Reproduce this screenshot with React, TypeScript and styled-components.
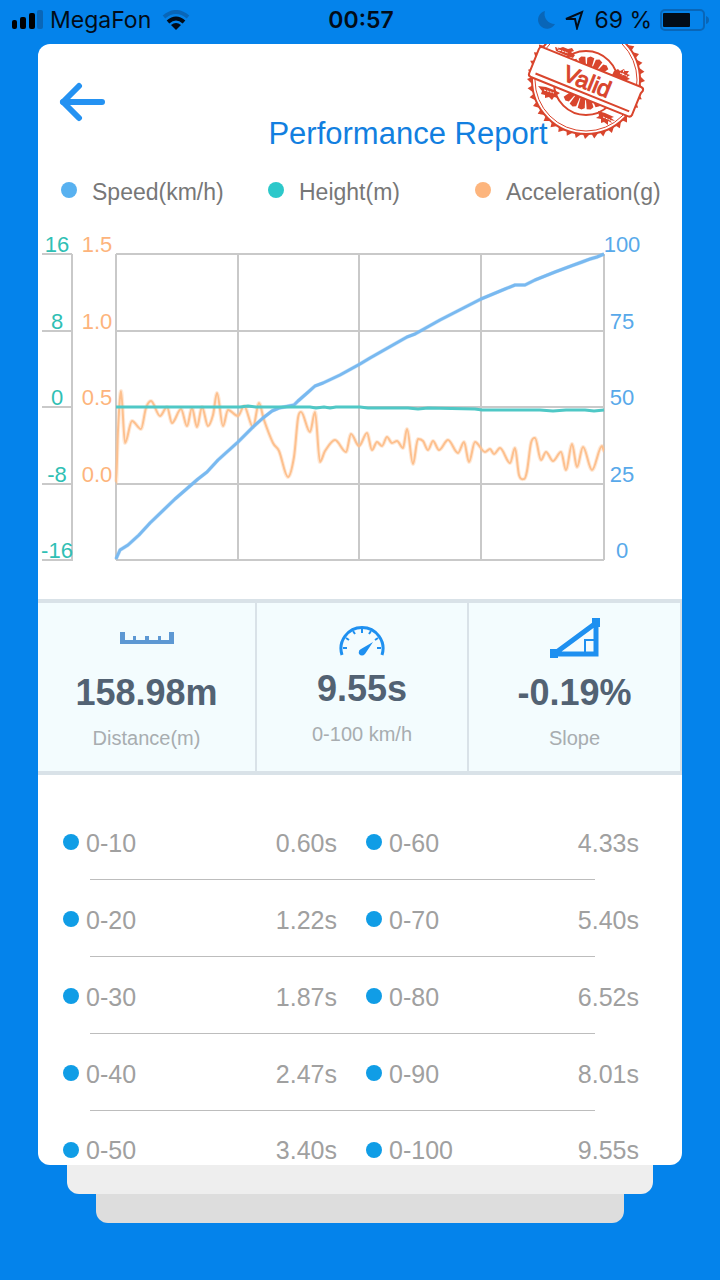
import React from 'react';
import styled, { createGlobalStyle } from 'styled-components';

const GlobalStyle = createGlobalStyle`
  *, *::before, *::after { box-sizing: border-box; }
  body {
    margin: 0;
    background: #0483eb;
    font-family: "Liberation Sans", Arial, Helvetica, sans-serif;
  }
`;

const Screen = styled.div`
  min-height: 100vh;
  background: #0483eb;
`;

const StatusBar = styled.header`
  display: grid;
  grid-template-columns: 1fr auto 1fr;
  align-items: center;
  height: 44px;
  padding: 0 10px 4px 12px;
  color: #020c18;
  font-family: Inter, "Liberation Sans", sans-serif;
  font-size: 23px;
  line-height: 28px;

  svg { display: block; flex: none; }
`;

const StatusGroup = styled.div<{ $end?: boolean }>`
  display: flex;
  align-items: center;
  justify-content: ${(p) => (p.$end ? 'flex-end' : 'flex-start')};
  gap: ${(p) => (p.$end ? 8 : 7)}px;
  white-space: nowrap;
`;

const Carrier = styled.span`
  margin-right: 4px;
`;

const Clock = styled.time`
  font-weight: 600;
`;

const Stack = styled.div`
  padding: 0 38px;
`;

const Card = styled.main`
  position: relative;
  overflow: hidden;
  border-radius: 12px;
  background: #fff;
`;

const Sheet = styled.div<{ $inset: number; $color: string }>`
  height: 29px;
  margin: 0 ${(p) => p.$inset}px;
  border-radius: 0 0 12px 12px;
  background: ${(p) => p.$color};
`;

const TitleBar = styled.div`
  display: flex;
  align-items: flex-start;
  height: 130px;
  padding: 36px 20px 0;
`;

const BackButton = styled.button`
  flex: none;
  margin: 0;
  padding: 0;
  border: 0;
  background: none;
  cursor: pointer;

  svg { display: block; }
`;

const Title = styled.h1`
  flex: 1;
  margin: 36px 0 0;
  padding-left: 48px;
  color: #127fe0;
  font-size: 31px;
  font-weight: 400;
  line-height: 36px;
  text-align: center;
  white-space: nowrap;
`;

const Stamp = styled.svg`
  position: absolute;
  top: 0;
  right: 34px;
`;

const Legend = styled.ul`
  display: grid;
  grid-template-columns: repeat(3, 1fr);
  margin: 0;
  padding: 4px 0 0 23px;
  list-style: none;
`;

const LegendItem = styled.li<{ $color: string }>`
  display: flex;
  align-items: center;
  gap: 15px;
  color: #777;
  font-size: 23px;
  line-height: 28px;
  white-space: nowrap;

  &::before {
    content: "";
    width: 16px;
    height: 16px;
    margin-bottom: 4px;
    border-radius: 50%;
    background: ${(p) => p.$color};
  }
`;

const Chart = styled.svg`
  display: block;
  width: 100%;
  height: auto;
  margin-top: 24px;
  font-family: "Liberation Sans", Arial, sans-serif;
  font-size: 22px;
`;

const Stats = styled.section`
  display: grid;
  grid-template-columns: 219fr 212fr 213fr;
  margin-top: 29px;
  border: solid #d9e2e8;
  border-width: 4px 0;
  background: #f3fcfe;
`;

const Stat = styled.div<{ $raised?: boolean }>`
  display: flex;
  flex-direction: column;
  align-items: center;
  height: 168px;
  padding-top: ${(p) => (p.$raised ? 9 : 13)}px;
  border-right: 2px solid #d9e2e8;
`;

const StatValue = styled.strong`
  margin-top: 11px;
  color: #526273;
  font-size: 36px;
  line-height: 44px;
`;

const StatLabel = styled.span`
  margin-top: 11px;
  color: #a8adb0;
  font-size: 20px;
  line-height: 24px;
`;

const Splits = styled.table`
  width: 100%;
  margin-top: 28px;
  border-collapse: collapse;
  table-layout: fixed;
  color: #a0a0a0;
  font-size: 25px;
  line-height: 30px;
`;

const SplitRow = styled.tr`
  background: linear-gradient(#bdbdbd, #bdbdbd) no-repeat 52px 100% / calc(100% - 139px) 1px;

  &:last-child { background: none; }
  &:last-child > * { padding-bottom: 0; }
  &:last-child > * { line-height: 29px; }
`;

const SplitRange = styled.th<{ $first?: boolean }>`
  padding: 25px 0 22px ${(p) => (p.$first ? 25 : 6)}px;
  font-weight: 400;
  text-align: left;
`;

const Bullet = styled.span`
  display: flex;
  align-items: center;
  gap: 7px;

  &::before {
    content: "";
    width: 16px;
    height: 16px;
    margin-bottom: 2px;
    border-radius: 50%;
    background: #109de6;
  }
`;

const SplitTime = styled.td<{ $last?: boolean }>`
  padding: 25px ${(p) => (p.$last ? 43 : 23)}px 22px 0;
  text-align: right;
`;

type Point = [number, number];

const speed: Point[] = [
  [116, 559], [120, 550], [128, 545], [139, 535], [150, 523], [175, 499], [198, 479],
  [207, 472], [218, 460], [238, 442], [253, 427], [263, 418], [272, 411], [279, 408],
  [294, 405], [298, 401], [306, 394], [315, 386], [323, 383], [340, 375], [360, 364],
  [370, 358], [407, 337], [415, 334], [440, 320], [481, 299], [505, 289], [515, 285],
  [525, 285], [535, 280], [555, 272], [571, 266], [582, 262], [590, 259], [597, 257], [604, 254],
];

const height: Point[] = [
  [116, 407], [240, 407], [248, 406], [256, 407], [300, 407], [310, 407], [316, 408], [324, 407],
  [330, 408], [336, 407], [360, 407], [368, 408], [408, 408], [418, 409], [428, 408],
  [475, 409], [482, 410], [540, 410], [553, 411], [566, 410], [585, 410], [594, 411], [604, 410],
];

const acceleration: Point[] = [
  [116, 483], [118, 430], [121, 391], [125, 443], [132, 421], [141, 429], [146, 408], [151, 401],
  [160, 416], [167, 407], [172, 423], [181, 409], [187, 426], [192, 408], [197, 427], [202, 407],
  [208, 426], [213, 415], [217, 393], [223, 426], [228, 410], [238, 416], [244, 406], [253, 427],
  [259, 403], [264, 420], [273, 443], [279, 451], [288, 477], [294, 457], [298, 418], [301, 412],
  [310, 432], [315, 412], [320, 462], [325, 451], [335, 440], [346, 452], [351, 434], [359, 446],
  [367, 433], [372, 450], [377, 442], [382, 446], [387, 437], [392, 443], [397, 441], [403, 448],
  [407, 429], [413, 464], [418, 439], [423, 441], [428, 450], [433, 441], [439, 450], [448, 440],
  [458, 453], [464, 442], [469, 462], [475, 442], [485, 452], [490, 449], [494, 454], [500, 448],
  [510, 463], [515, 448], [519, 475], [524, 479], [527, 471], [531, 443], [535, 438], [541, 460],
  [546, 452], [553, 461], [561, 452], [566, 470], [572, 444], [577, 467], [583, 447], [592, 470],
  [602, 446], [604, 451],
];

// Cubic interpolation that stays flat at every peak and trough.
function smooth(points: Point[]): string {
  const slope = points.map((p, i) => {
    const a = points[i - 1];
    const b = points[i + 1];
    if (!a || !b || (p[1] - a[1]) * (b[1] - p[1]) <= 0) return 0;
    return (b[1] - a[1]) / (b[0] - a[0]);
  });
  return points
    .map(([x, y], i) => {
      if (i === 0) return `M${x} ${y}`;
      const [px, py] = points[i - 1];
      const d = (x - px) / 3;
      return `C${px + d} ${py + slope[i - 1] * d} ${x - d} ${y - slope[i] * d} ${x} ${y}`;
    })
    .join('');
}

const straight = (points: Point[]) => points.map((p) => p.join(',')).join(' ');

const axisRows = [
  { y: 254, height: '16', accel: '1.5', speed: '100' },
  { y: 331, height: '8', accel: '1.0', speed: '75' },
  { y: 407, height: '0', accel: '0.5', speed: '50' },
  { y: 484, height: '-8', accel: '0.0', speed: '25' },
  { y: 560, height: '-16', accel: '', speed: '0' },
];

function PerformanceChart() {
  return (
    <Chart viewBox="38 230 644 340" role="img" aria-label="Speed, height and acceleration over the run">
      <g stroke="#c9c9c9" strokeWidth="2" fill="none">
        <path d="M72 254V561" />
        {axisRows.map((r) => (
          <path key={r.y} d={`M42 ${r.y}H72M116 ${r.y}H604`} />
        ))}
        <path d="M116 254V560M238 254V560M359 254V560M481 254V560M604 254V560" />
      </g>
      <g fill="none" strokeLinejoin="round">
        <path d={smooth(acceleration)} stroke="#fdc08e" strokeOpacity="0.35" strokeWidth="4" />
        <path d={smooth(acceleration)} stroke="#fdc08e" strokeWidth="2" />
        <polyline points={straight(speed)} stroke="#79baf2" strokeOpacity="0.35" strokeWidth="4" />
        <polyline points={straight(speed)} stroke="#79b9f0" strokeWidth="3" />
        <polyline points={straight(height)} stroke="#4fc8c6" strokeWidth="3" />
      </g>
      <g textAnchor="middle">
        {axisRows.map((r) => (
          <React.Fragment key={r.y}>
            <text x="57" y={r.y - 2} fill="#30bfb4">{r.height}</text>
            <text x="97" y={r.y - 2} fill="#fdb47c">{r.accel}</text>
            <text x="622" y={r.y - 2} fill="#58a9ea">{r.speed}</text>
          </React.Fragment>
        ))}
      </g>
    </Chart>
  );
}

function ValidStamp() {
  const cx = 62;
  const cy = 36;
  const teeth = Array.from({ length: 40 }, (_, i) => i * 9);
  const rays = [-40, -20, 0, 20, 40, 140, 160, 180, 200, 220];
  return (
    <Stamp width="124" height="98" viewBox="0 0 124 98" role="img" aria-label="Valid">
      <g fill="none" stroke="#d9452d">
        <circle cx={cx} cy={cy} r="54" strokeWidth="2" />
        <circle cx={cx} cy={cy} r="51" strokeWidth="1" />
        <circle cx={cx} cy="39" r="32" strokeWidth="2" />
      </g>
      <g fill="#d9452d">
        {teeth.map((a) => (
          <path key={a} d={`M${cx - 4} ${cy - 54}L${cx + 1} ${cy - 59}L${cx + 3} ${cy - 54}Z`} transform={`rotate(${a} ${cx} ${cy})`} />
        ))}
        {rays.map((a) => (
          <path key={a} d={`M${cx - 2} 27L${cx - 4} 14L${cx - 1} 12L${cx + 3} 13L${cx + 2} 27Z`} transform={`rotate(${a + 12} ${cx} 39)`} />
        ))}
        <path d="M31 3l5 1 3-1 5 2 4-1 2 3-3 1 4 3-2 3-8-3-9-4zM90 27l4-2 2 2 4-2 1 2 4 0-2 3 3 1-3 2 3 2-3 1 1 4-8-3-9-4zM14 42l8 1 8 3 6 3-3 2 1 3-4-1-2 3-3-3-4 1 0-3-4-1 1-3zM74 67l7 2 9 4-3 1 4 3-5-1 2 3-4-2 0 4-4-3-3 1 0-4-5-1 3-2z" />
      </g>
      <g fill="none" stroke="#fff" strokeWidth="1">
        <path d="M35 6l9 3M96 29l7 3M20 46l10 3M79 73l7 3M33 3l2 4M100 26l-2 6" strokeDasharray="2 1" />
      </g>
      <g transform="rotate(22 62 38)">
        <path d="M9 22H115Q118 22 118 25L117 28V51Q117 54 114 54H9Q6 54 6 51V25Q6 22 9 22Z" fill="#fff" stroke="#d9452d" strokeWidth="2" />
        <path d="M12 49H113" stroke="#d9452d" strokeWidth="2" />
        <text x="63" y="45" textAnchor="middle" fill="#d9452d" stroke="#d9452d" strokeWidth="1" fontFamily="Liberation Sans, Arial, sans-serif" fontSize="23">
          Valid
        </text>
      </g>
    </Stamp>
  );
}

const RulerIcon = () => (
  <svg width="54" height="44" viewBox="0 0 54 44" aria-hidden="true">
    <path d="M0 16H5V24H13V20H16V24H25V20H29V24H38V20H41V24H49V16H54V28H0Z" fill="#5d98d3" />
  </svg>
);

const GaugeIcon = () => (
  <svg width="46" height="44" viewBox="0 0 46 44" aria-hidden="true">
    <g fill="none" stroke="#1e90f0">
      <path d="M3 43A21 21 0 1 1 43 43" strokeWidth="3" />
      <path d="M4 36H8M7 26L10 28M14 19L16 22M23 16V21M32 19L30 22M39 26L36 28M42 36H38" strokeWidth="2" />
    </g>
    <path d="M34 30L26 42Q23 45 20 42Q19 38 22 37Z" fill="#1e90f0" />
  </svg>
);

const SlopeIcon = () => (
  <svg width="50" height="44" viewBox="0 0 50 44" aria-hidden="true">
    <path d="M4 38L46 7V38Z" fill="none" stroke="#1e90f0" strokeWidth="5" />
    <path d="M35 37V24H46" fill="none" stroke="#1e90f0" strokeWidth="2" />
    <path d="M0 33H8V42H0ZM42 2H50V11H42Z" fill="#1e90f0" />
  </svg>
);

const stats = [
  { icon: <RulerIcon />, value: '158.98m', label: 'Distance(m)' },
  { icon: <GaugeIcon />, value: '9.55s', label: '0-100 km/h', raised: true },
  { icon: <SlopeIcon />, value: '-0.19%', label: 'Slope' },
];

const splits = [
  ['0-10', '0.60s', '0-60', '4.33s'],
  ['0-20', '1.22s', '0-70', '5.40s'],
  ['0-30', '1.87s', '0-80', '6.52s'],
  ['0-40', '2.47s', '0-90', '8.01s'],
  ['0-50', '3.40s', '0-100', '9.55s'],
];

export default function App() {
  return (
    <Screen>
      <GlobalStyle />
      <StatusBar>
        <StatusGroup>
          <svg width="31" height="20" viewBox="0 0 31 20" aria-hidden="true">
            <rect x="0" y="10" width="5" height="9" rx="2" />
            <rect x="8" y="7" width="6" height="12" rx="2" />
            <rect x="17" y="3" width="6" height="16" rx="2" />
            <rect x="25" y="0" width="6" height="19" rx="2" fill="#0966b8" />
          </svg>
          <Carrier>MegaFon</Carrier>
          <svg width="28" height="20" viewBox="0 0 28 20" aria-hidden="true">
            <g fill="none" strokeWidth="4">
              <path d="M2 7Q14 -3 26 7" stroke="#0966b8" />
              <path d="M6 12Q14 5 22 12" stroke="#020c18" />
            </g>
            <path d="M9 15Q14 11 19 15L14 20Z" fill="#020c18" />
          </svg>
        </StatusGroup>
        <Clock>00:57</Clock>
        <StatusGroup $end>
          <svg width="18" height="20" viewBox="0 0 18 20" aria-hidden="true">
            <path d="M7 1A9 9 0 1 0 17 14A10 10 0 0 1 7 1Z" fill="#0966b8" />
          </svg>
          <svg width="22" height="20" viewBox="0 0 22 20" aria-hidden="true">
            <path d="M2 9L18 2L13 18L11 9Z" fill="none" stroke="#020c18" strokeWidth="2" />
          </svg>
          <span>69 %</span>
          <svg width="50" height="22" viewBox="0 0 50 22" aria-hidden="true">
            <rect x="1" y="1" width="43" height="20" rx="4" fill="none" stroke="#0966b8" strokeWidth="2" />
            <rect x="3" y="4" width="27" height="14" rx="1" fill="#020c18" />
            <path d="M46 7Q49 8 49 11Q49 14 46 15Z" fill="#0966b8" />
          </svg>
        </StatusGroup>
      </StatusBar>

      <Stack>
        <Card>
          <TitleBar>
            <BackButton type="button" aria-label="Back">
              <svg width="48" height="42" viewBox="0 0 48 42" aria-hidden="true">
                <path d="M21 6L5 22L21 38" fill="none" stroke="#2492f2" strokeWidth="6" strokeLinecap="round" strokeLinejoin="round" />
                <path d="M5 22H44" fill="none" stroke="#2492f2" strokeWidth="6" strokeLinecap="round" />
                <path d="M4 22L12 14V30Z" fill="#2492f2" />
              </svg>
            </BackButton>
            <Title>Performance Report</Title>
          </TitleBar>
          <ValidStamp />

          <Legend>
            <LegendItem $color="#58b1f0">Speed(km/h)</LegendItem>
            <LegendItem $color="#2cc8ca">Height(m)</LegendItem>
            <LegendItem $color="#fdb57d">Acceleration(g)</LegendItem>
          </Legend>

          <PerformanceChart />

          <Stats>
            {stats.map((s) => (
              <Stat key={s.label} $raised={s.raised}>
                {s.icon}
                <StatValue>{s.value}</StatValue>
                <StatLabel>{s.label}</StatLabel>
              </Stat>
            ))}
          </Stats>

          <Splits>
            <tbody>
              {splits.map(([rangeA, timeA, rangeB, timeB]) => (
                <SplitRow key={rangeA}>
                  <SplitRange scope="row" $first><Bullet>{rangeA}</Bullet></SplitRange>
                  <SplitTime>{timeA}</SplitTime>
                  <SplitRange scope="row"><Bullet>{rangeB}</Bullet></SplitRange>
                  <SplitTime $last>{timeB}</SplitTime>
                </SplitRow>
              ))}
            </tbody>
          </Splits>
        </Card>
        <Sheet $inset={29} $color="#eeeeee" />
        <Sheet $inset={58} $color="#dddddd" />
      </Stack>
    </Screen>
  );
}
